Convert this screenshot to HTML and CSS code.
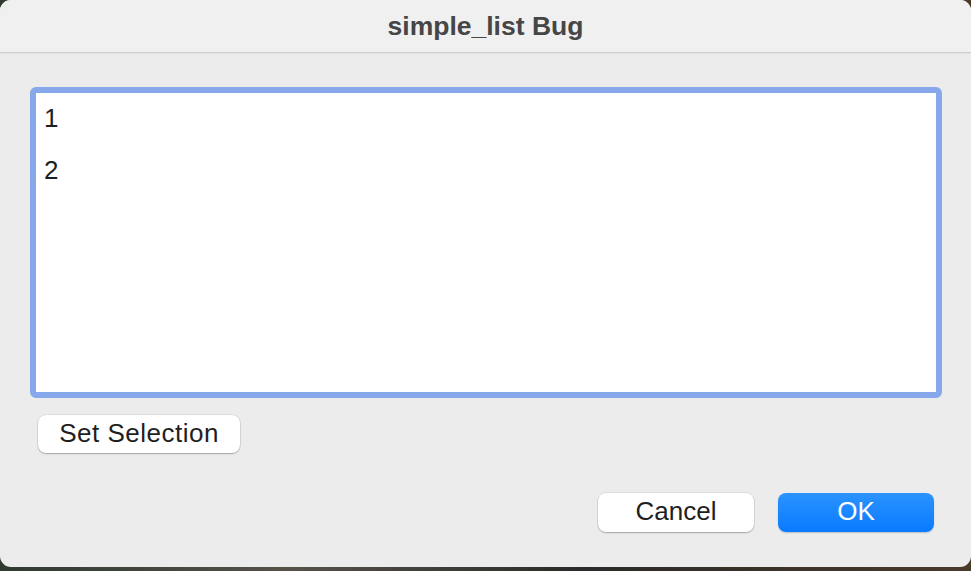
FILE: index.html
```html
<!DOCTYPE html>
<html>
<head>
<meta charset="utf-8">
<link rel="stylesheet" href="styles.css">
</head>
<body>
<div class="window">
  <div class="titlebar">simple_list Bug</div>
  <div class="content">
    <div class="listbox">
      <div class="list">
        <div class="row">1</div>
        <div class="row">2</div>
      </div>
    </div>
    <div class="left-actions">
      <button class="btn btn-set">Set Selection</button>
    </div>
    <div class="actions">
      <button class="btn btn-cancel">Cancel</button>
      <button class="btn btn-ok">OK</button>
    </div>
  </div>
</div>
</body>
</html>
```
FILE: styles.css
```css
html, body {
  margin: 0;
  padding: 0;
}
body {
  width: 971px;
  height: 571px;
  overflow: hidden;
  background: linear-gradient(90deg, #2f3a30 0%, #56524a 30%, #2a2a28 60%, #4a3a2a 100%);
  font-family: "Liberation Sans", Arial, sans-serif;
}
.window {
  width: 971px;
  height: 567px;
  background: #ececec;
  border-radius: 11px;
  overflow: hidden;
  display: flex;
  flex-direction: column;
}
.titlebar {
  flex: none;
  background: #f0f0f0;
  border-bottom: 1px solid #cfcfcf;
  box-shadow: 0 1px 0 #e2e2e2;
  display: flex;
  align-items: center;
  justify-content: center;
  font-weight: bold;
  font-size: 26.5px;
  color: #464646;
  padding-top: 1px;
  box-sizing: border-box;
  height: 53px;
}
.content {
  flex: 1;
  display: flex;
  flex-direction: column;
  padding: 34px 37px 0 30px;
}
.listbox {
  width: 912px;
  height: 311px;
  box-sizing: border-box;
  border: 6px solid #87a9ec;
  border-radius: 6px;
  background: #ffffff;
}
.list {
  padding-left: 8px;
  font-size: 26px;
  color: #1f1f1f;
}
.row {
  height: 52px;
  line-height: 50px;
}
.left-actions {
  display: flex;
  padding-left: 8px;
  margin-top: 17px;
}
.btn {
  font-family: "Liberation Sans", Arial, sans-serif;
  font-size: 26px;
  height: 38px;
  border: none;
  border-radius: 8px;
  padding: 0 0 3px 0;
  color: #1f1f1f;
  background: #ffffff;
  box-shadow: 0 0 0 0.5px rgba(0,0,0,0.12), 0 1px 1.5px rgba(0,0,0,0.25);
  line-height: 34px;
}
.btn-set {
  width: 202px;
  letter-spacing: 0.5px;
}
.actions {
  display: flex;
  justify-content: flex-end;
  gap: 24px;
  margin-top: 40px;
}
.btn-cancel {
  width: 156px;
  height: 39px;
}
.btn-ok {
  width: 156px;
  height: 39px;
  color: #ffffff;
  background: linear-gradient(180deg, #2b93ff 0%, #0a7bff 100%);
  box-shadow: 0 1px 1.5px rgba(0,0,0,0.2);
}
```
